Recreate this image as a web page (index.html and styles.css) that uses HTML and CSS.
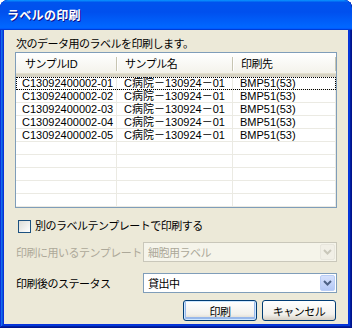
FILE: index.html
```html
<!DOCTYPE html>
<html lang="ja">
<head>
    <meta charset="UTF-8">
    <title>ラベルの印刷</title>
    <link rel="stylesheet" href="styles.css">
</head>
<body>
    <div class="window">
        <div class="title-bar">ラベルの印刷</div>
        <div class="client">
            <div class="intro ja">次のデータ用のラベルを印刷します。</div>

            <div class="list">
                <div class="list-head">
                    <div class="col c1"><span class="ja">サンプル</span>ID</div>
                    <div class="col c2 ja">サンプル名</div>
                    <div class="col c3 ja">印刷先</div>
                </div>
                <div class="row focus">
                    <div class="cell c1">C13092400002-01</div>
                    <div class="cell c2">C病院－130924－01</div>
                    <div class="cell c3">BMP51(53)</div>
                </div>
                <div class="row">
                    <div class="cell c1">C13092400002-02</div>
                    <div class="cell c2">C病院－130924－01</div>
                    <div class="cell c3">BMP51(53)</div>
                </div>
                <div class="row">
                    <div class="cell c1">C13092400002-03</div>
                    <div class="cell c2">C病院－130924－01</div>
                    <div class="cell c3">BMP51(53)</div>
                </div>
                <div class="row">
                    <div class="cell c1">C13092400002-04</div>
                    <div class="cell c2">C病院－130924－01</div>
                    <div class="cell c3">BMP51(53)</div>
                </div>
                <div class="row">
                    <div class="cell c1">C13092400002-05</div>
                    <div class="cell c2">C病院－130924－01</div>
                    <div class="cell c3">BMP51(53)</div>
                </div>
                <div class="row"><div class="cell c1"></div><div class="cell c2"></div><div class="cell c3"></div></div>
                <div class="row"><div class="cell c1"></div><div class="cell c2"></div><div class="cell c3"></div></div>
                <div class="row"><div class="cell c1"></div><div class="cell c2"></div><div class="cell c3"></div></div>
                <div class="row"><div class="cell c1"></div><div class="cell c2"></div><div class="cell c3"></div></div>
                <div class="row"><div class="cell c1"></div><div class="cell c2"></div><div class="cell c3"></div></div>
            </div>

            <label class="check-row">
                <span class="checkbox"></span>
                <span class="ja">別のラベルテンプレートで印刷する</span>
            </label>

            <div class="field disabled">
                <span class="ja">印刷に用いるテンプレート</span>
                <div class="combo">
                    <span class="ja">細胞用ラベル</span>
                    <span class="drop">
                        <svg width="9" height="6" viewBox="0 0 9 6"><path d="M1 1l3.5 3.5L8 1" fill="none" stroke="currentColor" stroke-width="2"/></svg>
                    </span>
                </div>
            </div>

            <div class="field status">
                <span class="ja">印刷後のステータス</span>
                <div class="combo">
                    <span class="ja">貸出中</span>
                    <span class="drop">
                        <svg width="9" height="6" viewBox="0 0 9 6"><path d="M1 1l3.5 3.5L8 1" fill="none" stroke="currentColor" stroke-width="2"/></svg>
                    </span>
                </div>
            </div>

            <div class="buttons">
                <button class="btn default ja">印刷</button>
                <button class="btn ja">キャンセル</button>
            </div>
        </div>
    </div>
</body>
</html>
```

FILE: styles.css
```css
body {
    margin: 0;
    background: #ffffff;
    font-family: "Liberation Sans", "Noto Sans CJK JP", sans-serif;
    font-size: 11px;
    color: #000000;
}
.ja {
    letter-spacing: -0.5px;
}
.window {
    width: 352px;
    height: 328px;
    display: flex;
    flex-direction: column;
    border-radius: 8px 8px 0 0;
    background: #0831d9;
    box-shadow: inset -1px -1px #00138c, inset 1px 1px #0831d9, inset -2px -2px #001ea0,
        inset 2px 2px #166aee, inset -3px -3px #003bda, inset 3px 3px #0855dd;
    overflow: hidden;
}
.title-bar {
    height: 30px;
    flex: none;
    display: flex;
    align-items: center;
    padding: 0 0 2px 7px;
    box-sizing: border-box;
    color: #ffffff;
    font-weight: bold;
    font-size: 12px;
    letter-spacing: 0.3px;
    text-shadow: 1px 1px #0f1089;
    border-radius: 8px 8px 0 0;
    background: linear-gradient(180deg, #0997ff, #0053ee 8%, #0050ee 40%, #0066ff 88%,
        #0066ff 93%, #005bff 95%, #003dd7 96%, #003dd7);
}
.client {
    flex: 1;
    margin: 0 4px 4px;
    background: #ece9d8;
    padding: 0 11px 0 11px;
    display: flex;
    flex-direction: column;
}
.intro {
    margin-top: 7px;
    height: 15px;
    line-height: 15px;
    padding-left: 1px;
}
.list {
    height: 156px;
    box-sizing: border-box;
    border: 1px solid #7f9db9;
    background: #ffffff;
    overflow: hidden;
}
.list-head {
    display: flex;
    height: 24px;
    box-sizing: border-box;
    background: linear-gradient(#ffffff, #f3f2ea);
    border-bottom: 3px solid #d6d2c2;
    box-shadow: inset 0 -1px #e2decd;
}
.col {
    box-sizing: border-box;
    line-height: 22px;
    padding-left: 9px;
    position: relative;
}
.col::after {
    content: '';
    position: absolute;
    right: 0;
    top: 4px;
    bottom: 3px;
    width: 1px;
    background: #c7c5b2;
    box-shadow: 1px 0 #ffffff;
}
.c1 { width: 101px; }
.c2 { width: 116px; }
.c3 { width: 103px; }
.col.c2 { padding-left: 8px; }
.col.c3 { padding-left: 8px; }
.row {
    display: flex;
    height: 13px;
    box-sizing: border-box;
    border-bottom: 1px solid #ebeae3;
}
.cell {
    box-sizing: border-box;
    line-height: 13px;
    padding-left: 6px;
    border-right: 1px solid #ebeae3;
    white-space: nowrap;
}
.cell.c2 { padding-left: 7px; }
.cell.c3 { padding-left: 7px; }
.row.focus {
    outline: 1px dotted #000000;
    outline-offset: -1px;
}
.check-row {
    margin-top: 12px;
    height: 13px;
    display: flex;
    align-items: center;
    padding-left: 3px;
    gap: 4px;
    line-height: 13px;
}
.checkbox {
    width: 13px;
    height: 13px;
    box-sizing: border-box;
    border: 1px solid #1c5180;
    background: linear-gradient(135deg, #dcdcd7, #ffffff);
}
.field {
    display: grid;
    grid-template-columns: 128px 1fr;
    align-items: center;
    padding-left: 1px;
}
.field.disabled {
    margin-top: 9px;
    color: #aca899;
}
.field.status {
    margin-top: 11px;
}
.combo {
    height: 20px;
    box-sizing: border-box;
    border: 1px solid #7f9db9;
    background: #ffffff;
    display: flex;
    align-items: center;
    justify-content: space-between;
    padding: 0 1px 0 4px;
    margin-left: -1px;
}
.disabled .combo {
    background: #f5f4ea;
    border-color: #c9c7ba;
    color: #aca899;
}
.drop {
    width: 15px;
    height: 16px;
    box-sizing: border-box;
    display: flex;
    align-items: center;
    justify-content: center;
    border: 1px solid #b9cdf6;
    border-radius: 2px;
    background: linear-gradient(#d6e1fc, #b4c8f6);
    color: #4d6185;
}
.disabled .drop {
    border-color: #e8e6dd;
    background: #f1efe6;
    color: #c9c7ba;
}
.buttons {
    margin-top: 7px;
    display: flex;
    justify-content: flex-end;
    gap: 5px;
    padding-right: 1px;
}
.btn {
    width: 74px;
    height: 21px;
    padding: 0;
    font-family: "Liberation Sans", "Noto Sans CJK JP", sans-serif;
    font-size: 11px;
    color: #000000;
    border: 1px solid #003c74;
    border-radius: 3px;
    background: linear-gradient(#ffffff, #f2f1ec 70%, #d6d0c5);
}
.btn.default {
    box-shadow: inset 0 0 0 1px #cee7ff, inset 0 -1px 0 2px #98b8ea;
}
```
